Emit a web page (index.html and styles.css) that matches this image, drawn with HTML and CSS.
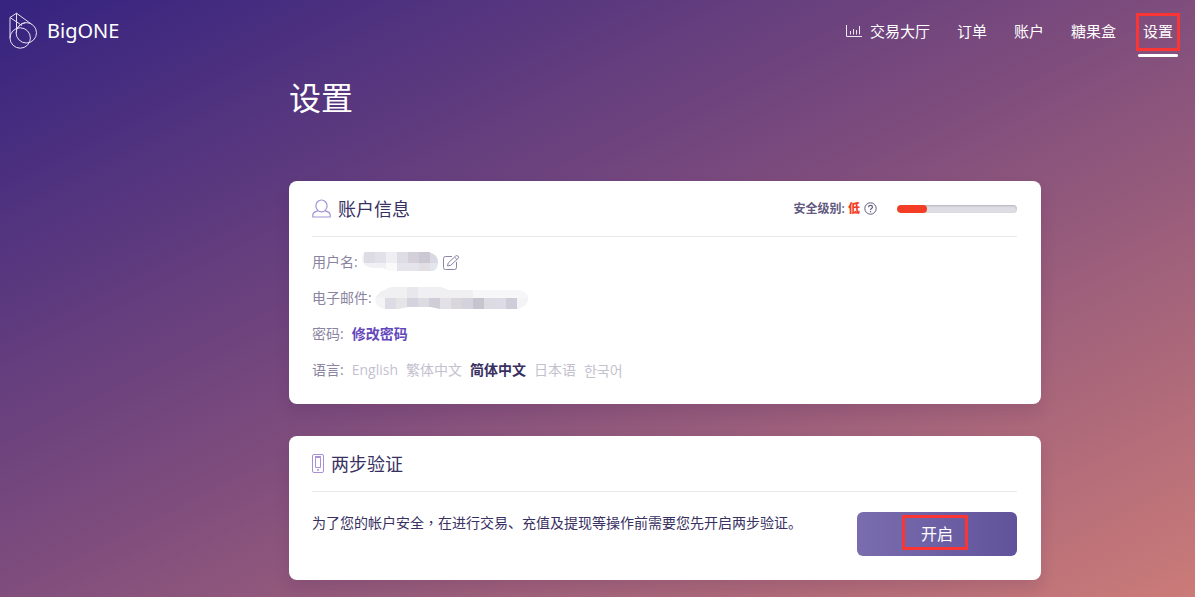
FILE: index.html
```html
<!DOCTYPE html>
<html lang="zh-CN">
<head>
<meta charset="utf-8">
<meta name="viewport" content="width=device-width, initial-scale=1">
<title>BigONE</title>
<link rel="stylesheet" href="styles.css">
</head>
<body>
<header class="topbar">
  <a class="brand" href="#">
    <svg class="brand-logo" width="28" height="38" viewBox="0 0 28 38" aria-hidden="true">
      <g fill="none" stroke="#e6e0f2" stroke-width="1">
        <circle cx="11.200" cy="26" r="10.200"/>
        <circle cx="17.300" cy="20.800" r="10.200"/>
        <path d="M1 26V5.500L7.500 1.200v19.600M7.500 1.200l15 11M1 5.500L13 13.500M7.500 17q4-6 9-6.400"/>
      </g>
    </svg>
    <span>BigONE</span>
  </a>
  <nav class="nav">
    <a class="nav-item" href="#">
      <svg width="16" height="12" viewBox="0 0 16 12" aria-hidden="true"><path d="M.5 0v11.500H16M4.500 6v3.500M7.500 4v5.500M10.500 5v4.500M13.500 1v8.500" fill="none" stroke="#eee6f2"/></svg>
      <span>交易大厅</span>
    </a>
    <a class="nav-item" href="#">订单</a>
    <a class="nav-item" href="#">账户</a>
    <a class="nav-item" href="#">糖果盒</a>
    <a class="nav-item nav-item-active" href="#" aria-current="page">设置</a>
  </nav>
</header>
<main class="page">
  <div class="content">
    <h1 class="page-title">设置</h1>

    <section class="card">
      <div class="card-head">
        <svg width="19" height="19" viewBox="0 0 19 19" aria-hidden="true"><g fill="none" stroke="#a493d8" stroke-width="1.200"><path d="M9.500 1a5.600 5.600 0 0 1 5.600 5.800c0 3.300-2.500 6-5.600 6s-5.600-2.700-5.600-6A5.600 5.600 0 0 1 9.500 1z"/><path d="M5.800 11.800C2.500 12.600.8 13.800.8 16v2h17.400v-2c0-2.200-1.700-3.400-5-4.200"/></g></svg>
        <h2 class="card-title">账户信息</h2>
        <div class="security">
          <span class="security-label">安全级别: <b class="security-low">低</b></span>
          <svg width="13" height="13" viewBox="0 0 13 13" aria-hidden="true"><g fill="none" stroke="#625a80"><circle cx="6.500" cy="6.500" r="5.700"/><path d="M4.600 5.200c0-2.600 3.900-2.400 3.900-.1 0 1.500-2 1.400-2 3M6.500 9v1.200" stroke-width="1.200"/></g></svg>
          <div class="meter"><div class="meter-fill" style="width:25%"></div></div>
        </div>
      </div>
      <div class="rows">
        <div class="row">
          <span class="row-label">用户名:</span>
          <svg class="mask-name" width="76" height="20" viewBox="0 0 76 20" aria-hidden="true">
            <clipPath id="name-shape"><path d="M3 0h64q9 3 9 10t-5 9H28q-4-2-8-3H10Q0 14 0 7q0-5 3-7z"/></clipPath>
            <g clip-path="url(#name-shape)">
              <path fill="#f1f1f5" d="M0 0h76v20H0z"/>
              <path fill="#dddbe4" d="M2 0h11v11H2z"/><path fill="#e2e0e8" d="M13 0h11v11H13z"/><path fill="#efeef3" d="M24 0h11v11H24z"/><path fill="#dedde5" d="M35 0h11v11H35z"/><path fill="#d3d0da" d="M46 0h11v11H46z"/><path fill="#cbc7d3" d="M57 0h11v11H57z"/><path fill="#d9d9e5" d="M68 0h8v11h-8z"/>
              <path fill="#fafafb" d="M24 11h11v9H24z"/><path fill="#e6e4eb" d="M35 11h22v9H35z"/><path fill="#e3dee3" d="M57 11h11v9H57z"/><path fill="#e2e6ef" d="M68 11h8v9h-8z"/>
            </g>
          </svg>
          <button class="edit" type="button" aria-label="编辑用户名">
            <svg width="17" height="15" viewBox="0 0 17 15" aria-hidden="true"><g fill="none" stroke="#8b84a6"><path d="M9 1.500H2.500q-2 0-2 2v9q0 2 2 2h9q2 0 2-2V7"/><path d="M4.500 11l.8-3.200L12.700 1q1.200-.9 2.300.1t.3 2.200L7.800 10.200zM11.500 2.200l2.500 2.400"/></g></svg>
          </button>
        </div>
        <div class="row">
          <span class="row-label">电子邮件:</span>
          <svg class="mask-mail" width="153" height="22" viewBox="0 0 153 22" aria-hidden="true">
            <clipPath id="mail-shape"><path d="M10 3q3-3 8-3h48l8 3h70q9 2 9 9t-10 10H65l-9-2H33l-10 2H10Q0 20 0 12q3-7 10-9z"/></clipPath>
            <g clip-path="url(#mail-shape)">
              <path fill="#f0f0f3" d="M0 0h153v11H0z"/><path fill="#f7f7f9" d="M98 0h55v11H98z"/><path fill="#e8e7eb" d="M32 0h11v11H32z"/><path fill="#f4f4f6" d="M0 11h153v11H0z"/>
              <path fill="#dddbe3" d="M10 11h11v11H10z"/><path fill="#e5e4e7" d="M21 11h11v11H21z"/><path fill="#d4d2dc" d="M32 11h11v11H32zM87 11h11v11H87z"/><path fill="#dcdbe1" d="M43 11h11v11H43zM109 11h11v11h-11z"/><path fill="#cfcdd7" d="M54 11h11v11H54zM131 11h11v11h-11z"/><path fill="#e3e1e7" d="M65 11h11v11H65z"/><path fill="#d9d7db" d="M76 11h11v11H76z"/><path fill="#c8c4cf" d="M98 11h11v11H98z"/><path fill="#dddce6" d="M120 11h11v11h-11z"/>
            </g>
          </svg>
        </div>
        <div class="row">
          <span class="row-label">密码:</span>
          <a class="change-link" href="#">修改密码</a>
        </div>
        <div class="row">
          <span class="row-label">语言:</span>
          <div class="langs">
            <a class="lang" href="#" lang="en">English</a>
            <a class="lang" href="#">繁体中文</a>
            <a class="lang lang-active" href="#">简体中文</a>
            <a class="lang" href="#" lang="ja">日本语</a>
            <a class="lang" href="#" lang="ko">한국어</a>
          </div>
        </div>
      </div>
    </section>

    <section class="card">
      <div class="card-head">
        <svg width="12" height="19" viewBox="0 0 12 19" aria-hidden="true"><g fill="none" stroke="#a88fd6"><rect x=".5" y=".5" width="11" height="18" rx="1.500"/><path d="M3.500 3.500h5v10h-5zM3 2.500h6"/></g><circle cx="6" cy="16" r="1" fill="#a88fd6"/></svg>
        <h2 class="card-title">两步验证</h2>
      </div>
      <div class="verify">
        <p class="verify-text">为了您的帐户安全<span class="comma" lang="zh-TW">，</span>在进行交易、充值及提现等操作前需要您先开启两步验证。</p>
        <button class="enable" type="button">开启</button>
      </div>
    </section>
  </div>
</main>
</body>
</html>
```
FILE: styles.css
```css
* { box-sizing: border-box; }

body {
  margin: 0;
  min-height: 100vh;
  font: 14px/20px "Open Sans", "Noto Sans CJK SC", sans-serif;
  color: #38305f;
  background: linear-gradient(to bottom right, #352380 0%, #7d4c7d 48%, #cb7b78 100%);
}

a { color: inherit; text-decoration: none; }

.topbar {
  display: flex;
  align-items: center;
  justify-content: space-between;
  height: 62px;
  padding: 0 17px 0 9px;
  color: #fff;
}

.brand {
  display: flex;
  align-items: center;
  gap: 10px;
  font: 20px/24px "Noto Sans", sans-serif;
}

.nav { display: flex; gap: 17px; }

.nav-item {
  display: flex;
  align-items: center;
  gap: 8px;
  padding: 0 5px;
  font-size: 15px;
  line-height: 24px;
}

.nav-item-active { position: relative; }

.nav-item-active::before {
  content: "";
  position: absolute;
  inset: -6px -2px -8px;
  border: 3px solid #fb3533;
}

.nav-item-active::after {
  content: "";
  position: absolute;
  inset: 35px 0 auto;
  height: 3px;
  border-radius: 2px;
  background: #fff;
}

.page {
  display: grid;
  grid-template-columns: 289fr minmax(0, 752px) 154fr;
}

.content {
  grid-column: 2;
  display: grid;
  gap: 32px;
  padding-bottom: 16px;
}

.page-title {
  margin: 12px 0 27px;
  font-size: 32px;
  font-weight: 400;
  line-height: 48px;
  color: #fff;
}

.card {
  padding: 0 24px 0 23px;
  border-radius: 8px;
  background: #fff;
  box-shadow: 0 8px 16px rgba(50, 20, 70, 0.12);
}

.card-head {
  display: flex;
  align-items: center;
  gap: 7px;
  height: 56px;
  border-bottom: 1px solid #e9e8eb;
}

.card-title {
  margin: 0;
  font-size: 18px;
  font-weight: 400;
  line-height: 24px;
}

.security {
  display: flex;
  align-items: center;
  gap: 4px;
  margin-left: auto;
}

.security-label {
  font-size: 12px;
  font-weight: 600;
  color: #625a80;
}

.security-low { color: #f43d25; }

.meter {
  width: 120px;
  height: 8px;
  margin-left: 16px;
  overflow: hidden;
  border-radius: 4px;
  background: #dedde3;
  box-shadow: inset 0 1px 2px rgba(60, 50, 80, 0.25);
}

.meter-fill {
  height: 100%;
  border-radius: 4px;
  background: #f43d25;
}

.rows { padding: 7px 0 16px; }

.row {
  display: flex;
  align-items: center;
  height: 36px;
}

.row-label { color: #8a849f; }

.mask-name { margin: 0 5px 0 4px; }

.mask-mail { margin-left: 3px; }

.edit {
  display: flex;
  padding: 0;
  border: 0;
  background: none;
}

.change-link {
  margin-left: 8px;
  font-weight: 700;
  color: #6448bb;
}

.langs {
  display: flex;
  gap: 8px;
  margin-left: 8px;
  color: #c4c1cf;
}

.lang-active { font-weight: 700; color: #38305f; }

.lang:lang(ko) { font-family: "Noto Sans CJK KR", sans-serif; }

.verify {
  display: flex;
  align-items: flex-start;
  justify-content: space-between;
  gap: 24px;
  padding: 20px 0 24px;
}

.verify-text { margin: 0; }

.comma { font-family: "Noto Sans CJK TC", sans-serif; }

.enable {
  position: relative;
  flex: none;
  width: 160px;
  height: 44px;
  border: 0;
  border-radius: 6px;
  font: inherit;
  font-size: 16px;
  color: #fff;
  background: linear-gradient(to right, #7a6dae, #61539b);
}

.enable::after {
  content: "";
  position: absolute;
  inset: 3px 49px 6px 45px;
  border: 3px solid #fb3533;
}
```
